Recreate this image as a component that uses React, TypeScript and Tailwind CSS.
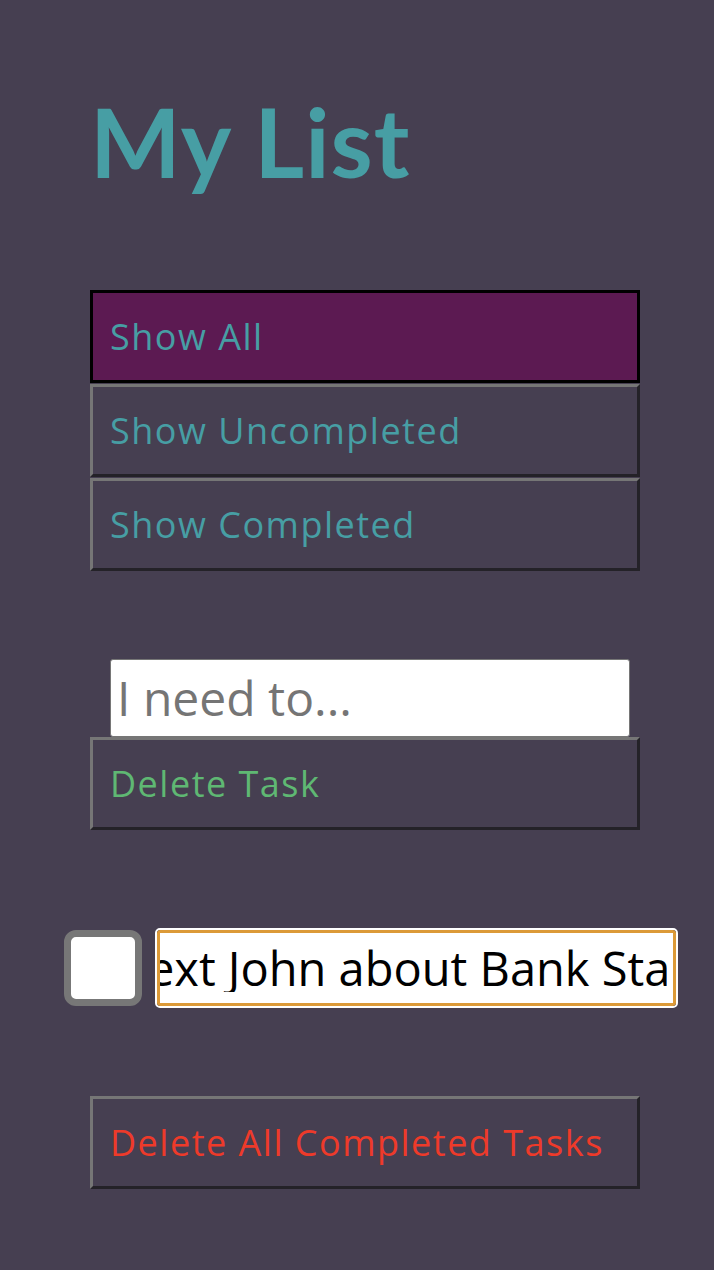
import React from 'react';

const filters = ['Show All', 'Show Uncompleted', 'Show Completed'];

const btnBase =
  'flex h-[93px] w-full items-center border-[3px] pl-[17px] text-left text-[36px] leading-none tracking-[1.5px]';
const outset = 'border-t-[#767676] border-l-[#767676] border-b-[#242228] border-r-[#242228] bg-[#463f51]';

export default function App() {
  const active = 'Show All';

  return (
    <div className="min-h-[1270px] bg-[#463f51] pl-[90px] pr-[74px] pt-[86px] font-['Open_Sans','Noto_Sans',sans-serif]">
      <h1 className="font-['Lato','Noto_Sans',sans-serif] text-[96px] font-bold leading-[110px] tracking-[1px] text-[#479ea4]">
        My List
      </h1>

      <div className="mt-[94px] flex flex-col gap-[1px]">
        {filters.map((f) => (
          <button
            key={f}
            className={`${btnBase} text-[#479ea4] ${
              f === active ? 'border-black bg-[#5c1a52]' : outset
            }`}
          >
            {f}
          </button>
        ))}
      </div>

      <div className="mt-[88px] flex flex-col">
        <div className="ml-[20px] flex h-[78px] w-[520px] items-center rounded-[3px] border border-[#767676] bg-white pl-[6px]">
          <span className="text-[48px] leading-none text-[#757575]">I need to...</span>
        </div>
        <button className={`${btnBase} ${outset} text-[#5fb873]`}>Delete Task</button>
      </div>

      <div className="-ml-[26px] mt-[98px] flex w-[614px] items-center gap-[13px]">
        <div className="h-[76px] w-[78px] shrink-0 rounded-[12px] border-[7px] border-[#777777] bg-white" />
        <div className="flex h-[80px] w-[523px] shrink-0 items-center overflow-hidden rounded-[5px] border-2 border-white">
          <div className="flex h-full w-full items-center rounded-[3px] border-[3px] border-[#dc9a38] bg-white pr-[6px]">
            <div className="flex-1 overflow-hidden whitespace-nowrap">
              <span className="-ml-[38px] text-[47px] leading-none text-black">
                Text John about Bank Statement
              </span>
            </div>
          </div>
        </div>
      </div>

      <div className="mt-[88px] pb-[80px]">
        <button className={`${btnBase} ${outset} text-[#ee3a2a]`}>Delete All Completed Tasks</button>
      </div>
    </div>
  );
}
